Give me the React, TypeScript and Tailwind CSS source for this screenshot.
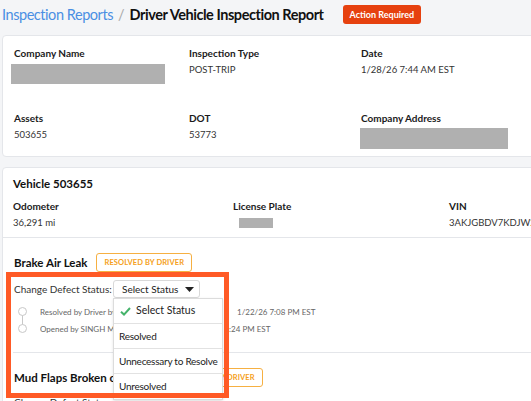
import React from "react";

const Redacted: React.FC<{ w: string; h: string }> = ({ w, h }) => (
  <div className={`${w} ${h} bg-[#b0b0b0]`} />
);

const Field: React.FC<{ label: string; value?: string; children?: React.ReactNode }> = ({
  label,
  value,
  children,
}) => (
  <div className="flex flex-col">
    <span className="text-[10px] font-bold text-[#1b1b1b] leading-[14px] whitespace-nowrap">{label}</span>
    {value ? (
      <span className="text-[9.5px] text-[#333] leading-[14px] mt-[3px] whitespace-nowrap">{value}</span>
    ) : (
      children
    )}
  </div>
);

const OrangeBadge: React.FC<{ text: string }> = ({ text }) => (
  <span className="inline-flex items-center h-[19px] px-[7px] rounded-[3px] border border-[#f6b042] text-[#f5a020] text-[7.5px] font-bold tracking-[0.1px] whitespace-nowrap">
    {text}
  </span>
);

const TimelineRow: React.FC<{ who: string; whoW: string; date: string; last?: boolean }> = ({
  who,
  whoW,
  date,
  last,
}) => (
  <div className="relative flex items-center h-[17px] text-[8px] text-[#666] whitespace-nowrap">
    <span className="w-[9px] h-[9px] rounded-full border border-[#c8c8c8] bg-white ml-[1px] mr-[13px] z-10" />
    {!last && <span className="absolute left-[5px] top-[12px] w-px h-[13px] bg-[#c8c8c8]" />}
    <span className={`${whoW} overflow-hidden`}>{who}</span>
    <span>{date}</span>
  </div>
);

export default function App() {
  const statuses = ["Resolved", "Unnecessary to Resolve", "Unresolved"];
  return (
    <div className="relative w-[531px] h-[401px] overflow-hidden bg-[#f4f5f7] font-['Lato',sans-serif]">
      {/* header */}
      <div className="flex items-center h-[28px] pl-[2px] pt-[1px]">
        <span className="text-[14.5px] tracking-[-0.45px] text-[#4a8fe3]">Inspection Reports</span>
        <span className="text-[14.5px] text-[#a9a9a9] mx-[5px]">/</span>
        <span className="text-[14.5px] tracking-[-0.45px] font-bold text-[#111]">Driver Vehicle Inspection Report</span>
        <span className="ml-[19px] h-[19px] px-[7px] flex items-center rounded-[3px] bg-[#e6410f] text-white text-[9px] font-bold">
          Action Required
        </span>
      </div>

      {/* general info card */}
      <div className="mt-[7px] ml-[2px] -mr-[6px] h-[122px] bg-white border border-[#e4e6ea] rounded-[4px] pl-[11px] pt-[10px]">
        <div className="grid grid-cols-[175px_172px_1fr] gap-y-[27px]">
          <Field label="Company Name">
            <div className="mt-[4px] -ml-[3px]">
              <Redacted w="w-[154px]" h="h-[20px]" />
            </div>
          </Field>
          <Field label="Inspection Type" value="POST-TRIP" />
          <Field label="Date" value="1/28/26 7:44 AM EST" />
          <Field label="Assets" value="503655" />
          <Field label="DOT" value="53773" />
          <Field label="Company Address">
            <div className="mt-[3px] -ml-[1px]">
              <Redacted w="w-[148px]" h="h-[21px]" />
            </div>
          </Field>
        </div>
      </div>

      {/* vehicle + defects card */}
      <div className="mt-[10px] ml-[2px] -mr-[6px] h-[260px] bg-white border border-[#e4e6ea] rounded-[4px]">
        <div className="px-[10px] pt-[8px] h-[70px] border-b border-[#e4e6ea]">
          <div className="text-[11.5px] font-bold text-[#111] leading-[16px]">Vehicle 503655</div>
          <div className="grid grid-cols-[220px_216px_1fr] mt-[7px]">
            <Field label="Odometer" value="36,291 mi" />
            <Field label="License Plate">
              <div className="mt-[5px] ml-[6px]">
                <Redacted w="w-[34px]" h="h-[10px]" />
              </div>
            </Field>
            <Field label="VIN" value="3AKJGBDV7KDJW2841" />
          </div>
        </div>

        {/* defect 1 */}
        <div className="ml-[10px] pl-[1px] pt-[15px] h-[115px] border-b border-[#e4e6ea]">
          <div className="flex items-center gap-[9px]">
            <span className="text-[11.5px] font-bold text-[#111]">Brake Air Leak</span>
            <OrangeBadge text="RESOLVED BY DRIVER" />
          </div>
          <div className="flex items-center mt-[8px] h-[18px]">
            <span className="text-[10px] text-[#333] w-[99px] whitespace-nowrap">Change Defect Status:</span>
            <div className="w-[87px] h-[18px] border border-[#d9d9d9] rounded-[3px] flex items-center justify-between pl-[8px] pr-[5px] text-[10px] text-[#222]">
              <span>Select Status</span>
              <svg width="9" height="5" viewBox="0 0 9 5">
                <path d="M0 0 H9 L4.5 5 Z" fill="#222" />
              </svg>
            </div>
          </div>
          <div className="mt-[5px] pl-[3px]">
            <TimelineRow who="Resolved by Driver by SINGH MATTHEW" whoW="w-[197px]" date="1/22/26 7:08 PM EST" />
            <TimelineRow who="Opened by SINGH MATTHEW on" whoW="w-[152px]" date="1/22/26 6:24 PM EST" last />
          </div>
        </div>

        {/* defect 2 */}
        <div className="ml-[10px] pl-[1px] pt-[15px]">
          <div className="flex items-center gap-[9px]">
            <span className="text-[11.5px] font-bold text-[#111] w-[144px] whitespace-nowrap overflow-hidden">
              Mud Flaps Broken or Missing
            </span>
            <OrangeBadge text="RESOLVED BY DRIVER" />
          </div>
          <div className="flex items-center mt-[6px] h-[18px]">
            <span className="text-[10px] text-[#333] whitespace-nowrap">Change Defect Status:</span>
          </div>
        </div>
      </div>

      {/* open dropdown menu */}
      <div className="absolute left-[113px] top-[298px] w-[110px] bg-white border border-[#dcdcdc] shadow-sm text-[10px] tracking-[-0.25px] text-[#222]">
        <div className="flex items-center h-[25px] border-b border-[#e2e2e2] pl-[6px]">
          <svg width="11" height="9" viewBox="0 0 11 9" className="mr-[5px]">
            <path d="M1 4.8 L4 7.6 L10 1" fill="none" stroke="#45b36b" strokeWidth="2" />
          </svg>
          <span className="text-[10.5px] tracking-normal">Select Status</span>
        </div>
        {statuses.map((s, i) => (
          <div
            key={s}
            className={`flex items-center h-[25px] pl-[5px] whitespace-nowrap ${
              i < statuses.length - 1 ? "border-b border-[#e2e2e2]" : ""
            }`}
          >
            {s}
          </div>
        ))}
      </div>

      {/* highlight annotation */}
      <div className="absolute left-[6px] top-[272px] w-[223px] h-[126px] border-[5px] border-[#ff5a26] pointer-events-none" />
    </div>
  );
}
